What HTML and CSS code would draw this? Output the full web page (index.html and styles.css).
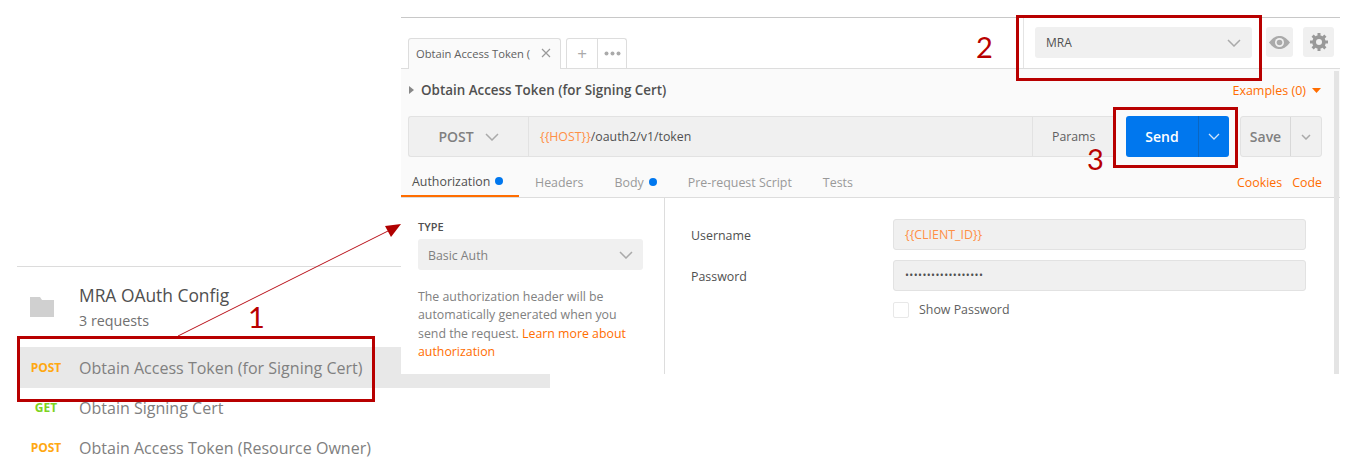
FILE: index.html
```html
<!DOCTYPE html>
<html lang="en">

<head>
    <meta charset="UTF-8">
    <meta name="viewport" content="width=device-width, initial-scale=1.0">
    <title>Obtain Access Token</title>
    <link rel="stylesheet" href="styles.css">
</head>

<body>
    <div class="canvas">

        <!-- sidebar piece -->
        <div class="shot sidebar">
            <div class="folder">
                <svg class="folder-icon" width="24" height="20" viewBox="0 0 24 20">
                    <path d="M0 0H10L12 3H24V20H0Z" fill="#d0d0d0" />
                    <path d="M12 1H24V3H13Z" fill="#fff" />
                </svg>
                <div>
                    <div class="folder-name">MRA OAuth Config</div>
                    <div class="folder-count">3 requests</div>
                </div>
            </div>
            <div class="req req-active"><span class="method post">POST</span><span>Obtain Access Token (for Signing Cert)</span></div>
            <div class="req"><span class="method get">GET</span><span>Obtain Signing Cert</span></div>
            <div class="req"><span class="method post">POST</span><span>Obtain Access Token (Resource Owner)</span></div>
        </div>

        <!-- builder piece -->
        <div class="shot builder">
            <div class="tabbar">
                <div class="tab">
                    <span class="tab-name">Obtain Access Token (</span>
                    <svg width="10" height="10" viewBox="0 0 10 10"><path d="M1 1L9 9M9 1L1 9" stroke="#999" stroke-width="1.2" /></svg>
                </div>
                <div class="tab-btns">
                    <div class="tab-btn plus">+</div>
                    <div class="tab-btn">
                        <svg width="17" height="5" viewBox="0 0 17 5"><circle cx="2.5" cy="2.5" r="2" fill="#aaa" /><circle cx="8.5" cy="2.5" r="2" fill="#aaa" /><circle cx="14.5" cy="2.5" r="2" fill="#aaa" /></svg>
                    </div>
                </div>
                <div class="env">
                    <div class="env-select">
                        <span>MRA</span>
                        <svg class="chev" width="14" height="8" viewBox="0 0 14 8"><path d="M1 1L7 7L13 1" /></svg>
                    </div>
                    <div class="icon-btn eye">
                        <svg width="21" height="13" viewBox="0 0 21 13">
                            <path d="M0 6.5C4 1.5 7 0 10.500 0S17 1.500 21 6.500C17 11.500 14 13 10.500 13S4 11.500 0 6.500Z" fill="#aaa" />
                            <circle cx="10.500" cy="6.500" r="4.500" fill="#f0f0f0" />
                            <circle cx="10.500" cy="6.500" r="2.800" fill="#aaa" />
                        </svg>
                    </div>
                    <div class="icon-btn gear">
                        <svg width="18" height="18" viewBox="0 0 18 18">
                            <circle cx="9" cy="9" r="5" fill="none" stroke="#999" stroke-width="3.600" />
                            <path d="M9 0V18M0 9H18M2.600 2.600L15.400 15.400M15.400 2.600L2.600 15.400" stroke="#999" stroke-width="3" />
                            <circle cx="9" cy="9" r="3" fill="#f0f0f0" />
                        </svg>
                    </div>
                </div>
            </div>

            <div class="request">
                <div class="title-row">
                    <svg class="title-arrow" width="5" height="8" viewBox="0 0 5 8"><path d="M0 0L5 4L0 8Z" fill="#888" /></svg>
                    <span class="title">Obtain Access Token (for Signing Cert)</span>
                    <span class="examples">Examples (0)</span>
                    <svg width="9" height="5" viewBox="0 0 9 5"><path d="M0 0H9L4.500 5Z" fill="#ff6d00" /></svg>
                </div>

                <div class="url-row">
                    <div class="url-group">
                        <div class="verb">POST
                            <svg class="chev" width="14" height="8" viewBox="0 0 14 8"><path d="M1 1L7 7L13 1" /></svg>
                        </div>
                        <div class="url"><span class="var">{{HOST}}</span>/oauth2/v1/token</div>
                        <div class="params">Params</div>
                    </div>
                    <div class="send">
                        <div class="send-main">Send</div>
                        <div class="send-more">
                            <svg width="12" height="7" viewBox="0 0 12 7"><path d="M1 1L6 6L11 1" fill="none" stroke="#cfe4fb" stroke-width="1.300" /></svg>
                        </div>
                    </div>
                    <div class="save">
                        <div class="save-main">Save</div>
                        <div class="save-more">
                            <svg class="chev" width="10" height="6" viewBox="0 0 10 6"><path d="M1 1L5 5L9 1" /></svg>
                        </div>
                    </div>
                </div>

                <div class="subtabs">
                    <div class="subtab subtab-on">Authorization<i class="dot"></i></div>
                    <div class="subtab">Headers</div>
                    <div class="subtab">Body<i class="dot"></i></div>
                    <div class="subtab">Pre-request Script</div>
                    <div class="subtab">Tests</div>
                    <div class="links"><span>Cookies</span><span>Code</span></div>
                </div>
            </div>

            <div class="auth">
                <div class="auth-left">
                    <div class="type-label">TYPE</div>
                    <div class="type-select">
                        <span>Basic Auth</span>
                        <svg class="chev" width="14" height="8" viewBox="0 0 14 8"><path d="M1 1L7 7L13 1" /></svg>
                    </div>
                    <p class="help">The authorization header will be automatically generated when you send the request. <span class="link">Learn more about</span> <span class="link">authorization</span></p>
                </div>
                <div class="auth-right">
                    <div class="field">
                        <label>Username</label>
                        <div class="input var">{{CLIENT_ID}}</div>
                    </div>
                    <div class="field">
                        <label>Password</label>
                        <div class="input pass">&bull;&bull;&bull;&bull;&bull;&bull;&bull;&bull;&bull;&bull;&bull;&bull;&bull;&bull;&bull;&bull;&bull;&bull;</div>
                    </div>
                    <div class="show-pass"><i class="check"></i>Show Password</div>
                </div>
            </div>
            <div class="scrollbar"></div>
        </div>

        <!-- annotations drawn over the pieces -->
        <svg class="arrow" width="1350" height="470" viewBox="0 0 1350 470">
            <path d="M178 336L390 230" stroke="#b8101a" stroke-width="1" />
            <path d="M401 224L385 226L391 237Z" fill="#b00000" />
        </svg>
        <div class="mark mark1"></div>
        <div class="mark mark2"></div>
        <div class="mark mark3"></div>
        <div class="num num1">1</div>
        <div class="num num2">2</div>
        <div class="num num3">3</div>
    </div>
</body>

</html>
```

FILE: styles.css
```css
body {
    margin: 0;
    background-color: #fff;
    font-family: "Open Sans", "Liberation Sans", sans-serif;
    color: #808080;
}

.canvas {
    position: relative;
    width: 1350px;
    height: 470px;
    overflow: hidden;
}

.shot {
    position: absolute;
}

.chev {
    fill: none;
    stroke: #aaa;
    stroke-width: 1.5;
}

/* sidebar */
.sidebar {
    left: 17px;
    top: 266px;
    width: 533px;
    border-top: 1px solid #dcdcdc;
}

.folder {
    display: flex;
    align-items: center;
    height: 80px;
}

.folder-icon {
    margin-left: 13px;
    margin-right: 25px;
}

.folder-name {
    margin-top: -1px;
    font-size: 17.400px;
    line-height: 24px;
    color: #505050;
}

.folder-count {
    margin-top: 4px;
    font-size: 14.300px;
    line-height: 20px;
    color: #707070;
}

.req {
    display: flex;
    align-items: center;
    height: 40px;
    font-size: 16.050px;
    color: #808080;
}

.req-active {
    height: 41px;
    background-color: #e8e8e8;
}

.method {
    width: 62px;
    font-size: 12px;
    font-weight: 700;
    text-align: center;
    padding-right: 4px;
    box-sizing: border-box;
    margin-top: -1px;
}

.post {
    color: #ffa812;
}

.get {
    color: #7ed321;
}

/* request builder */
.builder {
    left: 401px;
    top: 17px;
    width: 939px;
    height: 357px;
    background-color: #fff;
    border-top: 1px solid #c8c8c8;
    box-sizing: border-box;
}

.tabbar {
    display: flex;
    align-items: flex-end;
    height: 51px;
    padding-left: 7px;
    border-bottom: 1px solid #ddd;
    box-sizing: border-box;
}

.tab {
    display: flex;
    align-items: center;
    width: 153px;
    height: 31px;
    margin-bottom: -1px;
    padding: 0 9px 2px 7px;
    box-sizing: border-box;
    background-color: #fafafa;
    border: 1px solid #ddd;
    border-bottom: none;
    border-radius: 3px 3px 0 0;
    font-size: 11.200px;
    color: #606060;
}

.tab-name {
    flex: 1;
    white-space: nowrap;
    overflow: hidden;
}

.tab-btns {
    display: flex;
    height: 30px;
    margin-left: 5px;
    border: 1px solid #ddd;
    border-bottom: none;
    border-radius: 3px 3px 0 0;
    box-sizing: border-box;
}

.tab-btn {
    display: flex;
    align-items: center;
    justify-content: center;
    width: 28px;
}

.plus {
    width: 30px;
    border-right: 1px solid #ddd;
    font-size: 17px;
    color: #aaa;
}

.env {
    display: flex;
    align-self: stretch;
    margin-left: auto;
    padding: 9px 6px 0 11px;
    border-left: 1px solid #e4e4e4;
}

.env-select {
    display: flex;
    align-items: center;
    justify-content: space-between;
    width: 217px;
    height: 31px;
    padding: 0 11px;
    box-sizing: border-box;
    background-color: #f0f0f0;
    border-radius: 3px;
    font-size: 12px;
    color: #505050;
}

.icon-btn {
    display: flex;
    align-items: center;
    justify-content: center;
    height: 30px;
    background-color: #f0f0f0;
    border-radius: 3px;
}

.eye {
    width: 27px;
    margin-left: 14px;
}

.gear {
    width: 31px;
    margin-left: 10px;
}

.request {
    height: 129px;
    background-color: #fafafa;
    border-bottom: 1px solid #ddd;
    box-sizing: border-box;
    padding-right: 18px;
}

.title-row {
    display: flex;
    align-items: center;
    height: 47px;
    padding: 0 1px 5px 8px;
    box-sizing: border-box;
}

.title-arrow {
    margin-right: 7px;
}

.title {
    flex: 1;
    font-size: 13.400px;
    font-weight: 600;
    color: #505050;
}

.examples {
    margin-right: 6px;
    font-size: 12.500px;
    color: #ff6d00;
}

.url-row {
    display: flex;
    height: 41px;
    margin-left: 7px;
}

.url-group {
    display: flex;
    width: 708px;
    background-color: #f0f0f0;
    border: 1px solid #e2e2e2;
    border-right: none;
    border-radius: 3px 0 0 3px;
    box-sizing: border-box;
}

.verb {
    display: flex;
    align-items: center;
    justify-content: center;
    gap: 11px;
    width: 119px;
    border-right: 1px solid #e2e2e2;
    font-size: 14px;
    font-weight: 600;
    color: #808080;
}

.url {
    flex: 1;
    padding-left: 11px;
    font-size: 12.350px;
    line-height: 39px;
    color: #505050;
}

.var {
    color: #ff8f45;
}

.params {
    width: 84px;
    padding-left: 19px;
    box-sizing: border-box;
    border-left: 1px solid #e2e2e2;
    font-size: 12.300px;
    line-height: 39px;
    color: #606060;
}

.send {
    display: flex;
    width: 103px;
    margin-left: 10px;
    background-color: #0077ee;
    border-radius: 3px;
}

.send-main {
    width: 72px;
    border-right: 1px solid #0a66c2;
    font-size: 14px;
    font-weight: 600;
    line-height: 41px;
    text-align: center;
    color: #fff;
}

.send-more,
.save-more {
    flex: 1;
    display: flex;
    align-items: center;
    justify-content: center;
}

.save {
    display: flex;
    width: 82px;
    margin-left: 11px;
    background-color: #f0f0f0;
    border: 1px solid #e2e2e2;
    border-radius: 3px;
    box-sizing: border-box;
}

.save-main {
    width: 49px;
    border-right: 1px solid #d8d8d8;
    font-size: 14px;
    font-weight: 600;
    line-height: 39px;
    text-align: center;
    color: #808080;
}

.subtabs {
    display: flex;
    height: 41px;
    padding-top: 10px;
    box-sizing: border-box;
    font-size: 12.400px;
}

.subtab {
    display: flex;
    align-items: center;
    height: 30px;
    padding: 0 11px;
    margin-right: 9px;
    color: #999;
}

.subtab-on {
    width: 118px;
    margin-right: 5px;
    box-sizing: border-box;
    color: #505050;
    border-bottom: 2px solid #ff6d00;
}

.dot {
    width: 8px;
    height: 8px;
    margin-left: 5px;
    border-radius: 50%;
    background-color: #0077ee;
}

.links {
    display: flex;
    gap: 10px;
    align-items: center;
    height: 30px;
    margin-left: auto;
    color: #ff6d00;
}

.auth {
    display: flex;
    height: 176px;
}

.auth-left {
    width: 264px;
    padding: 21px 21px 0 17px;
    box-sizing: border-box;
    border-right: 1px solid #ddd;
}

.type-label {
    font-size: 11px;
    font-weight: 600;
    line-height: 16px;
    color: #505050;
}

.type-select {
    display: flex;
    align-items: center;
    justify-content: space-between;
    height: 31px;
    margin-top: 4px;
    padding: 1px 10px 0;
    box-sizing: border-box;
    background-color: #f0f0f0;
    border-radius: 3px;
    font-size: 12.300px;
    color: #808080;
}

.help {
    margin: 18px 0 0;
    font-size: 12.350px;
    line-height: 18.400px;
    color: #808080;
}

.link {
    color: #ff6d00;
}

.auth-right {
    flex: 1;
    padding: 21px 34px 0 26px;
}

.field {
    display: flex;
    align-items: center;
    margin-bottom: 10px;
}

.field label {
    width: 202px;
    padding-top: 2px;
    font-size: 12.400px;
    color: #505050;
}

.input {
    flex: 1;
    height: 31px;
    padding-left: 11px;
    background-color: #f0f0f0;
    border: 1px solid #e2e2e2;
    border-radius: 3px;
    box-sizing: border-box;
    font-size: 12.400px;
    line-height: 29px;
}

.pass {
    font-size: 10.500px;
    letter-spacing: 0.400px;
    color: #505050;
}

.show-pass {
    display: flex;
    align-items: center;
    margin-left: 202px;
    font-size: 12.400px;
    color: #606060;
}

.check {
    width: 16px;
    height: 16px;
    margin-right: 10px;
    border: 1px solid #e8e8e8;
    border-radius: 2px;
    box-sizing: border-box;
}

.scrollbar {
    position: absolute;
    right: 1px;
    top: 53px;
    bottom: 0;
    width: 5px;
    background-color: #e4e4e4;
}

/* annotations */
.arrow {
    position: absolute;
    left: 0;
    top: 0;
}

.mark {
    position: absolute;
    border: 3px solid #b80000;
    box-sizing: border-box;
}

.mark1 {
    left: 17px;
    top: 336px;
    width: 358px;
    height: 66px;
}

.mark2 {
    left: 1016px;
    top: 15px;
    width: 246px;
    height: 66px;
}

.mark3 {
    left: 1113px;
    top: 107px;
    width: 125px;
    height: 61px;
}

.num {
    position: absolute;
    font-family: Lato, "Open Sans", sans-serif;
    font-size: 29px;
    line-height: 34px;
    color: #b80000;
}

.num1 {
    left: 248px;
    top: 300px;
}

.num2 {
    left: 976px;
    top: 30px;
}

.num3 {
    left: 1087px;
    top: 142px;
}
```
